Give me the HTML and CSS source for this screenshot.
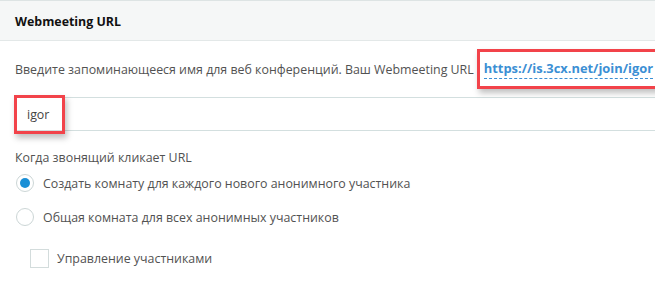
FILE: index.html
```html
<!DOCTYPE html>
<html>
<head>
<meta charset="utf-8">
<link rel="stylesheet" href="styles.css">
</head>
<body>
<div class="panel">
  <div class="panel-head">Webmeeting URL</div>
  <div class="panel-body">
    <div class="desc">
      <span>Введите запоминающееся имя для веб конференций. Ваш Webmeeting URL</span>
      <span class="hl hl-link"><a class="link">https://is.3cx.net/join/igor</a></span>
    </div>
    <div class="input-row">
      <span class="hl hl-input">igor</span>
    </div>
    <div class="label">Когда звонящий кликает URL</div>
    <div class="radio-row"><span class="radio checked"></span><span>Создать комнату для каждого нового анонимного участника</span></div>
    <div class="radio-row"><span class="radio"></span><span>Общая комната для всех анонимных участников</span></div>
    <div class="check-row"><span class="check"></span><span>Управление участниками</span></div>
  </div>
</div>
</body>
</html>
```
FILE: styles.css
```css
html, body { margin: 0; padding: 0; background: #fff; }
body {
  width: 655px; height: 281px; overflow: hidden;
  font-family: "Open Sans", "Noto Sans", sans-serif;
  font-size: 12.4px; line-height: 17px; color: #525252;
}
.panel { border-top: 1px solid #dde4e4; }
.panel-head {
  background: #f5f7f7; height: 40px; box-sizing: border-box;
  border-bottom: 1px solid #e3e8e8;
  padding: 12px 15px 0; font-weight: 700; color: #111;
}
.panel-body { padding: 0 0 0 15px; }
.desc { display: flex; align-items: center; height: 56px; white-space: nowrap; }
.hl { position: relative; box-shadow: 0 0 0 3px #f2434a, 2px 4px 6px 3px rgba(0,0,0,0.25); }
.hl-link { margin-left: 6px; padding: 8px 4px 9px 4px; }
.link { color: #3b8fd4; font-weight: 700; font-size: 12.9px; border-bottom: 1px dashed #3b8fd4; padding-bottom: 1px; }
.input-row {
  height: 34px; box-sizing: border-box;
  border-top: 1px solid #d3dfdf; border-bottom: 1px solid #d3dfdf;
  display: flex; align-items: center;
}
.hl-input { margin-left: 2px; padding: 8px 13px 8px 10px; color: #444; }
.label { margin-top: 18px; }
.radio-row { display: flex; align-items: center; height: 34px; }
.radio {
  width: 18px; height: 18px; border: 1px solid #ccd6d6; border-radius: 50%;
  box-sizing: border-box; margin-right: 9px; margin-left: 1px;
  display: flex; align-items: center; justify-content: center;
}
.radio.checked::after { content: ""; width: 10px; height: 10px; border-radius: 50%; background: #1a8fd6; }
.check-row { display: flex; align-items: center; margin-top: 15px; padding-left: 15px; }
.check { width: 19px; height: 19px; border: 1px solid #d3dcdc; box-sizing: border-box; margin-right: 8px; }
```
